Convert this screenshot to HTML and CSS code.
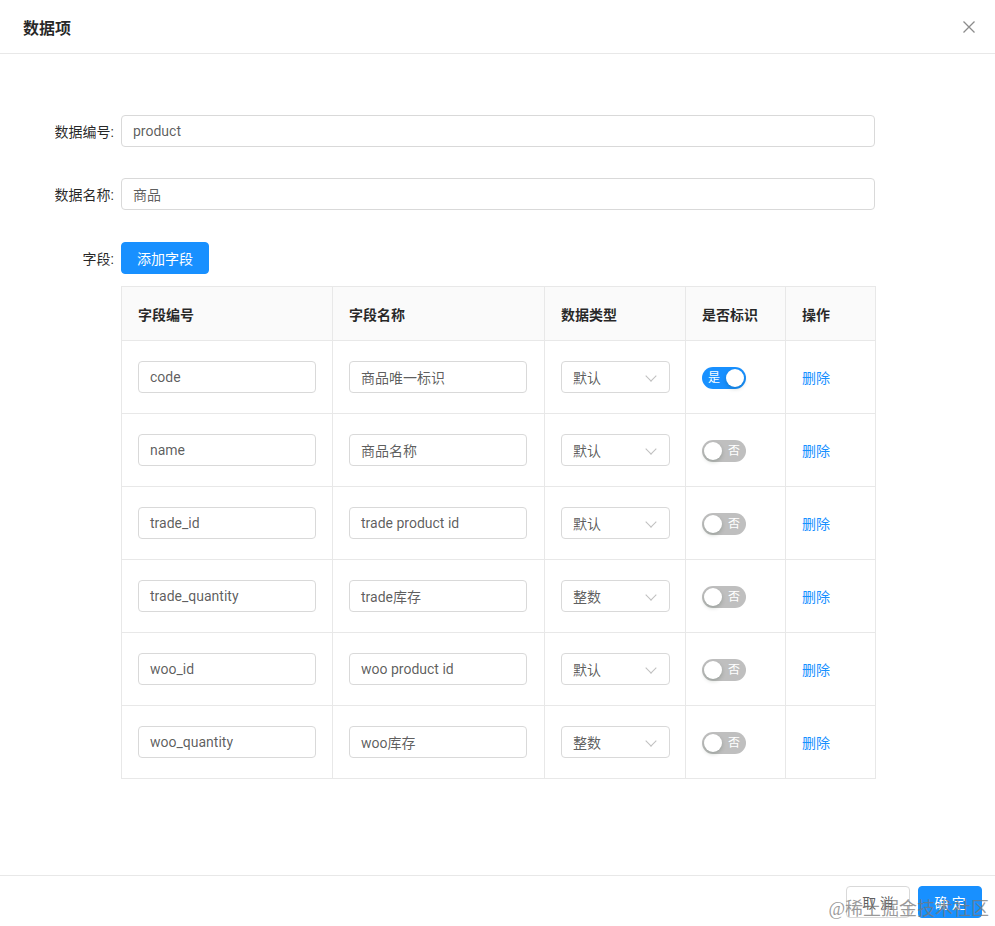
FILE: index.html
```html
<!DOCTYPE html>
<html lang="zh">
<head>
<meta charset="utf-8">
<link rel="stylesheet" href="styles.css">
</head>
<body>
<div class="modal">
  <div class="header">
    <div class="title">数据项</div>
    <svg class="close" width="14" height="14" viewBox="0 0 14 14"><path d="M1.5 1.5 L12.5 12.5 M12.5 1.5 L1.5 12.5" stroke="#8c8c8c" stroke-width="1.3" fill="none"/></svg>
  </div>
  <div class="body">
    <div class="form-row r1">
      <label class="label">数据编号:</label>
      <div class="input wide">product</div>
    </div>
    <div class="form-row r2">
      <label class="label">数据名称:</label>
      <div class="input wide">商品</div>
    </div>
    <div class="form-row r3">
      <label class="label">字段:</label>
      <button class="btn primary">添加字段</button>
    </div>
    <div class="table-wrap">
      <table class="table">
        <colgroup><col class="c1"><col class="c2"><col class="c3"><col class="c4"><col class="c5"></colgroup>
        <thead>
          <tr><th>字段编号</th><th>字段名称</th><th>数据类型</th><th>是否标识</th><th>操作</th></tr>
        </thead>
        <tbody>
          <tr><td><div class="input cell">code</div></td><td><div class="input cell">商品唯一标识</div></td><td><div class="select">默认<span class="arrow"></span></div></td><td><span class="switch on"><span class="sw-text">是</span><span class="knob"></span></span></td><td><a class="link">删除</a></td></tr>
          <tr><td><div class="input cell">name</div></td><td><div class="input cell">商品名称</div></td><td><div class="select">默认<span class="arrow"></span></div></td><td><span class="switch"><span class="knob"></span><span class="sw-text">否</span></span></td><td><a class="link">删除</a></td></tr>
          <tr><td><div class="input cell">trade_id</div></td><td><div class="input cell">trade product id</div></td><td><div class="select">默认<span class="arrow"></span></div></td><td><span class="switch"><span class="knob"></span><span class="sw-text">否</span></span></td><td><a class="link">删除</a></td></tr>
          <tr><td><div class="input cell">trade_quantity</div></td><td><div class="input cell">trade库存</div></td><td><div class="select">整数<span class="arrow"></span></div></td><td><span class="switch"><span class="knob"></span><span class="sw-text">否</span></span></td><td><a class="link">删除</a></td></tr>
          <tr><td><div class="input cell">woo_id</div></td><td><div class="input cell">woo product id</div></td><td><div class="select">默认<span class="arrow"></span></div></td><td><span class="switch"><span class="knob"></span><span class="sw-text">否</span></span></td><td><a class="link">删除</a></td></tr>
          <tr><td><div class="input cell">woo_quantity</div></td><td><div class="input cell">woo库存</div></td><td><div class="select">整数<span class="arrow"></span></div></td><td><span class="switch"><span class="knob"></span><span class="sw-text">否</span></span></td><td><a class="link">删除</a></td></tr>
        </tbody>
      </table>
    </div>
  </div>
  <div class="footer">
    <button class="btn default">取 消</button>
    <button class="btn primary">确 定</button>
    <div class="watermark">@稀土掘金技术社区</div>
  </div>
</div>
</body>
</html>
```

FILE: styles.css
```css
* { box-sizing: border-box; }
html, body { margin: 0; padding: 0; background: #fff; }
body {
  font-family: Roboto, "Noto Sans CJK SC", sans-serif;
  font-size: 14px;
  color: rgba(0,0,0,0.65);
}
.modal { width: 995px; height: 926px; display: flex; flex-direction: column; position: relative; }
.header {
  height: 54px;
  border-bottom: 1px solid #e8e8e8;
  display: flex;
  align-items: center;
  justify-content: space-between;
  padding: 0 19px 0 23px;
}
.title { font-size: 16px; font-weight: 700; color: rgba(0,0,0,0.85); }
.close { display: block; }
.body { flex: 1; padding-top: 61px; }
.form-row { display: flex; align-items: center; height: 32px; }
.r1 { margin-bottom: 31px; }
.r2 { margin-bottom: 32px; }
.r3 { margin-bottom: 12px; }
.label {
  width: 121px;
  text-align: right;
  padding-right: 7px;
  color: rgba(0,0,0,0.85);
}
.input {
  height: 32px;
  border: 1px solid #d9d9d9;
  border-radius: 4px;
  padding: 0 11px;
  display: flex;
  align-items: center;
  color: rgba(0,0,0,0.65);
  background: #fff;
}
.wide { width: 754px; }
.btn {
  height: 32px;
  padding: 0 15px;
  border-radius: 4px;
  font-family: inherit;
  font-size: 14px;
  cursor: pointer;
}
.primary { background: #1890ff; border: 1px solid #1890ff; color: #fff; }
.default { background: #fff; border: 1px solid #d9d9d9; color: rgba(0,0,0,0.65); }
.r3 .btn { width: 88px; padding: 0; }
.table-wrap { margin-left: 121px; width: 754px; }
.table {
  width: 754px;
  border-collapse: collapse;
  table-layout: fixed;
  border: 1px solid #e8e8e8;
}
.c1 { width: 211px; }
.c2 { width: 212px; }
.c3 { width: 141px; }
.c4 { width: 100px; }
.c5 { width: 90px; }
th {
  background: #fafafa;
  text-align: left;
  font-weight: 700;
  color: rgba(0,0,0,0.85);
  height: 54px;
  padding: 0 16px;
  border: 1px solid #e8e8e8;
}
td {
  height: 73px;
  padding: 0 16px;
  border: 1px solid #e8e8e8;
  vertical-align: middle;
}
.cell { width: 178px; }
.select {
  width: 109px;
  height: 32px;
  border: 1px solid #d9d9d9;
  border-radius: 4px;
  padding: 0 11px;
  display: flex;
  align-items: center;
  position: relative;
}
.arrow {
  position: absolute;
  right: 14px;
  top: 10px;
  width: 8px;
  height: 8px;
  border-right: 1px solid #bfbfbf;
  border-bottom: 1px solid #bfbfbf;
  transform: rotate(45deg);
}
.switch {
  display: inline-flex;
  align-items: center;
  width: 44px;
  height: 22px;
  border-radius: 11px;
  background: #bfbfbf;
  padding: 0 2px;
  justify-content: space-between;
  vertical-align: middle;
  margin-top: 2px;
}
.switch.on { background: #1890ff; }
.knob { width: 18px; height: 18px; border-radius: 50%; background: #fff; box-shadow: 0 2px 4px rgba(0,35,11,0.2); }
.sw-text { color: #fff; font-size: 12px; line-height: 22px; padding: 0 3px 0 4px; }
.switch:not(.on) .sw-text { padding: 0 4px 0 3px; }
.link { color: #1890ff; text-decoration: none; }
.footer {
  height: 51px;
  border-top: 1px solid #e8e8e8;
  display: flex;
  justify-content: flex-end;
  align-items: center;
  gap: 8px;
  padding: 0 13px 0 16px;
  position: relative;
}
.footer .btn { width: 64px; padding: 0; margin-top: 2px; }
.watermark {
  position: absolute;
  right: 6px;
  top: 18px;
  font-family: "Liberation Serif", "Noto Sans CJK SC", serif;
  font-size: 18px;
  color: rgba(120,120,120,0.75);
  pointer-events: none;
}
```
